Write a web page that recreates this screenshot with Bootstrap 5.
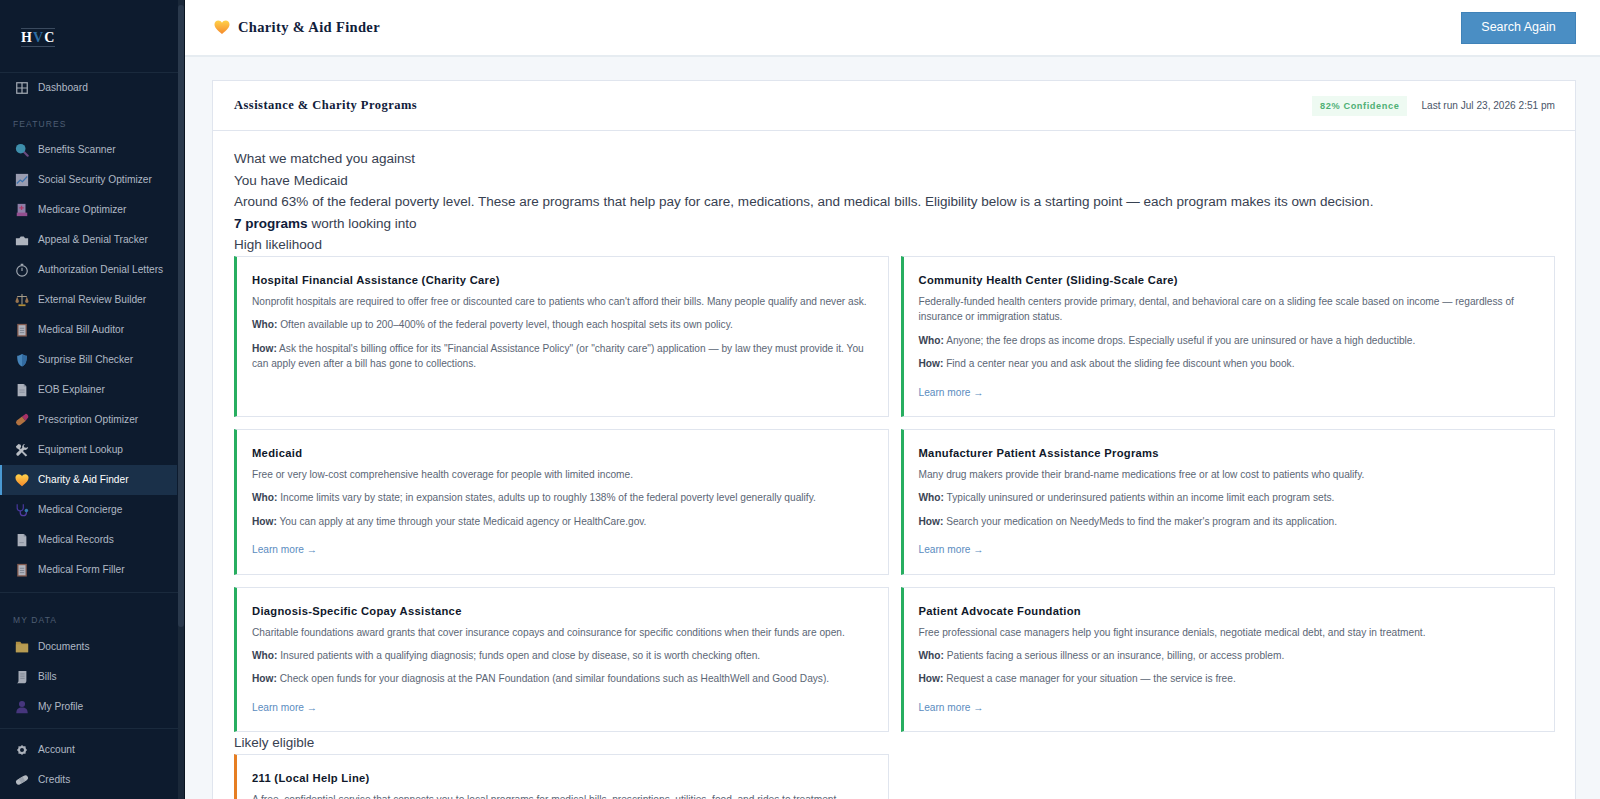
<!DOCTYPE html>
<html lang="en">
<head>
<meta charset="UTF-8">
<title>Charity &amp; Aid Finder</title>
<link href="https://cdn.jsdelivr.net/npm/bootstrap@5.3.0/dist/css/bootstrap.min.css" rel="stylesheet">
<style>
html, body { height: 100%; }
body { font-family: "Liberation Sans", Arial, sans-serif; background: #f4f7fa; overflow: hidden; color: #2d3748; }
.shell { height: 799px; }
/* sidebar */
.sidebar { width: 185px; flex: none; background: #0d1b2e; border-right: 1px solid #0a1420; height: 799px; overflow: hidden; }
.side-inner { width: 178px; flex: none; }
.side-track { width: 6px; flex: none; background: #1a2839; padding-top: 5px; }
.side-thumb { height: 622px; background: #2a394c; border-radius: 3px; }
.logo { height: 73px; border-bottom: 1px solid #1a2a3d; padding: 25px 0 0 21px; }
.logo span { display: inline-block; font-family: "Liberation Serif", serif; font-weight: 700; font-size: 14px; line-height: 17px; letter-spacing: 1.1px; color: #fff; border-top: 1px solid #3a4a5e; border-bottom: 1px solid #3a4a5e; }
.logo b { color: #2e6da4; }
.side-link { display: flex; align-items: center; height: 30px; padding-left: 13px; gap: 9px; color: #b0b9c5; font-size: 10.2px; text-decoration: none; border-left: 2px solid transparent; margin-right: 1px; }
.side-link svg { width: 14px; height: 14px; flex: none; opacity: .75; }
.side-link.active { background: #1a3049; color: #fff; border-left-color: #4a9ad4; }
.side-link.active svg { opacity: 1; }
.side-label { font-size: 8.5px; letter-spacing: 1.1px; color: #4d5e73; padding-left: 13px; line-height: 12px; }
.side-sep { border-top: 1px solid #1a2a3d; }
/* top bar */
.topbar { height: 57px; background: #fff; border-bottom: 2px solid #e6ecf1; padding: 0 24px 0 29px; flex: none; }
.page-title { font-family: "Liberation Serif", serif; font-weight: 700; font-size: 14.5px; letter-spacing: .35px; color: #10203a; margin: 0; }
.btn-search { background: #4a8ec4; border: 1px solid #3f82b8; color: #fff; font-size: 12.5px; width: 115px; height: 32px; padding: 0; border-radius: 0; }
.content { padding: 23px 24px 0 27px; }
/* panel */
.panel { border: 1px solid #e0e5ee; border-radius: 0; }
.panel .card-header { background: #fff; height: 50px; padding: 0 20px 0 21px; border-bottom: 1px solid #e0e5ee; border-radius: 0; }
.panel-title { font-family: "Liberation Serif", serif; font-weight: 700; font-size: 12.5px; letter-spacing: .47px; color: #10203a; margin: 0; }
.conf { background: #eefaf2; color: #4fb075; font-size: 9.2px; font-weight: 700; letter-spacing: .6px; padding: 0 8px; height: 20px; line-height: 20px; }
.last-run { font-size: 10.1px; color: #4a5568; }
.panel .card-body { padding: 17px 20px 0 21px; font-size: 13.52px; line-height: 21.6px; color: #374151; }
.panel .card-body strong { color: #10203a; }
.prog-row { --bs-gutter-x: 12px; --bs-gutter-y: 12px; }
.prog { border: 1px solid #e0e5ee; border-left: 3.5px solid #27ae60; border-radius: 0; padding: 15px 18px 16px 15px; font-size: 10.17px; line-height: 15.4px; color: #5b6675; height: 100%; }
.prog.likely { border-left-color: #e67e22; }
.prog h6 { font-size: 11.2px; font-weight: 700; line-height: 16px; color: #10182a; margin: 0 0 6px; letter-spacing: .3px; }
.prog p { margin: 0 0 8px; }
.prog p b { color: #3a4454; }
.prog a { display: block; margin-top: 13px; color: #5b8cc0; text-decoration: none; }
</style>
</head>
<body>
<div class="shell d-flex">

  <aside class="sidebar d-flex">
    <div class="side-inner">
      <div class="logo"><span>H<b>V</b>C</span></div>

      <nav class="nav flex-column">
        <a class="side-link" href="#">
          <svg viewBox="0 0 16 16"><rect x="2" y="2" width="12" height="12" fill="none" stroke="#d5dae0" stroke-width="1.4"/><path d="M8 2v12M2 8h12" stroke="#d5dae0" stroke-width="1.4"/></svg>Dashboard</a>
      </nav>

      <div class="side-label" style="margin-top:15px;margin-bottom:5px">FEATURES</div>

      <nav class="nav flex-column">
        <a class="side-link" href="#">
          <svg viewBox="0 0 16 16"><path d="M10 10l4.500 4.500" stroke="#8a5a9a" stroke-width="2.400" stroke-linecap="round"/><circle cx="6.500" cy="6.500" r="5.500" fill="#4fb6d6"/></svg>Benefits Scanner</a>
        <a class="side-link" href="#">
          <svg viewBox="0 0 16 16"><rect x="1" y="1" width="14" height="14" fill="#c8c8dc"/><path d="M2 12l4-4 2.500 2L14 4" fill="none" stroke="#4a8ed8" stroke-width="1.400"/></svg>Social Security Optimizer</a>
        <a class="side-link" href="#">
          <svg viewBox="0 0 16 16"><rect x="3" y="1" width="9" height="11" fill="#b8a0d0"/><rect x="2" y="11" width="12" height="4" fill="#c060b0"/><path d="M7.500 3v5M5 5.500h5" stroke="#e8447a" stroke-width="1.400"/></svg>Medicare Optimizer</a>
        <a class="side-link" href="#">
          <svg viewBox="0 0 16 16"><path d="M1 6h4l1.500-2H10l1.500 2H15v7a1 1 0 0 1-1 1H2a1 1 0 0 1-1-1z" fill="#e4e8ee"/></svg>Appeal &amp; Denial Tracker</a>
        <a class="side-link" href="#">
          <svg viewBox="0 0 16 16"><circle cx="8" cy="9" r="6" fill="none" stroke="#d5dae0" stroke-width="1.300"/><path d="M8 9V5.500M6.500 1.500h3" stroke="#d5dae0" stroke-width="1.300"/></svg>Authorization Denial Letters</a>
        <a class="side-link" href="#">
          <svg viewBox="0 0 16 16"><path d="M8 1v12M2.500 4h11" stroke="#d8c8a8" stroke-width="1.200"/><path d="M0.500 9.500L2.500 4l2 5.500a2 2 0 0 1-4 0zM11.500 9.500L13.500 4l2 5.500a2 2 0 0 1-4 0z" fill="#c8935a"/><rect x="4" y="13" width="8" height="2" fill="#e8b23a"/></svg>External Review Builder</a>
        <a class="side-link" href="#">
          <svg viewBox="0 0 16 16"><rect x="2.500" y="1" width="11" height="14.500" fill="#a8705a"/><rect x="4" y="2.500" width="8" height="11.500" fill="#e8e8ee"/><path d="M5.500 6h5M5.500 8.500h5M5.500 11h5" stroke="#9aa0aa"/></svg>Medical Bill Auditor</a>
        <a class="side-link" href="#">
          <svg viewBox="0 0 16 16"><path d="M8 1c2 1.500 4 2 5.500 2 0 6-1 10-5.500 12.500C3.500 13 2.500 9 2.500 3 4 3 6 2.500 8 1z" fill="#5aa8e8"/><path d="M8 1c2 1.500 4 2 5.500 2 0 6-1 10-5.500 12.500z" fill="#3f86c8"/></svg>Surprise Bill Checker</a>
        <a class="side-link" href="#">
          <svg viewBox="0 0 16 16"><path d="M3 1h7l3 3v11H3z" fill="#dfe2ea"/><path d="M10 1v3h3z" fill="#aab0bc"/><path d="M5 8h6M5 10.500h6" stroke="#aab0bc"/></svg>EOB Explainer</a>
        <a class="side-link" href="#">
          <svg viewBox="0 0 16 16"><path d="M8 4l4-3a3 3 0 0 1 3 4l-3 4z" fill="#d8387a"/><path d="M8 4L2 8.500a3.400 3.400 0 0 0 4.500 5L12 9z" fill="#e89048"/></svg>Prescription Optimizer</a>
        <a class="side-link" href="#">
          <svg viewBox="0 0 16 16"><path d="M5 5l9 9-1.800 1.500L3.500 6.500z" fill="#e8ecf0"/><path d="M1 4l3-3 2.500 1 .5 2.500L4.500 7 2 6z" fill="#f2f4f6"/><path d="M15 4.500a3.500 3.500 0 0 1-4.500 3.300L4.500 14a1.500 1.500 0 0 1-2.500-2.500l6.300-6A3.500 3.500 0 0 1 11.500 1L9.800 3.200l1 2 2.200.3z" fill="#f2f4f6"/></svg>Equipment Lookup</a>
        <a class="side-link active" href="#">
          <svg viewBox="0 0 16 16"><defs><linearGradient id="hg" x1="0" y1="0" x2="0" y2="1"><stop offset="0" stop-color="#ffd24a"/><stop offset="1" stop-color="#f58a2c"/></linearGradient></defs><path d="M8 15C3 11 .5 8.500 .5 5.300 .5 3 2.300 1.500 4.300 1.500 5.800 1.500 7.200 2.300 8 3.700 8.800 2.300 10.200 1.500 11.700 1.500c2 0 3.800 1.500 3.800 3.800C15.500 8.500 13 11 8 15z" fill="url(#hg)"/></svg>Charity &amp; Aid Finder</a>
        <a class="side-link" href="#">
          <svg viewBox="0 0 16 16"><path d="M2.500 1.500v4a3.500 3.500 0 0 0 7 0v-4" fill="none" stroke="#5a3fc0" stroke-width="1.400"/><path d="M6 9v2a3.500 3.500 0 0 0 7 0V9.500" fill="none" stroke="#6a48c8" stroke-width="1.400"/><circle cx="13" cy="8.500" r="2" fill="#3f9ad8"/></svg>Medical Concierge</a>
        <a class="side-link" href="#">
          <svg viewBox="0 0 16 16"><path d="M3 1h7l3 3v11H3z" fill="#dfe2ea"/><path d="M10 1v3h3z" fill="#aab0bc"/><path d="M5 11h5" stroke="#aab0bc"/></svg>Medical Records</a>
        <a class="side-link" href="#">
          <svg viewBox="0 0 16 16"><rect x="2.500" y="1" width="11" height="14.500" fill="#a8705a"/><rect x="4" y="2.500" width="8" height="11.500" fill="#e8e8ee"/><path d="M5.500 6h5M5.500 8.500h5M5.500 11h5" stroke="#9aa0aa"/></svg>Medical Form Filler</a>
      </nav>

      <div class="side-sep" style="margin-top:7px"></div>
      <div class="side-label" style="margin-top:21px;margin-bottom:6px">MY DATA</div>

      <nav class="nav flex-column">
        <a class="side-link" href="#">
          <svg viewBox="0 0 16 16"><path d="M1 2h5l1.500 2H15v10H1z" fill="#e8b84a"/><rect x="1" y="5" width="14" height="9" fill="#f0c860"/></svg>Documents</a>
        <a class="side-link" href="#">
          <svg viewBox="0 0 16 16"><path d="M4 1h9v11c0 1.500-.5 3-2 3H2c1 0 2-1 2-3z" fill="#d8dce4"/><path d="M6 4.500h5M6 7h5M6 9.500h5" stroke="#a0a6b2"/></svg>Bills</a>
        <a class="side-link" href="#">
          <svg viewBox="0 0 16 16"><circle cx="8" cy="4.500" r="3.500" fill="#5a3f98"/><path d="M1.500 15c0-5 2.500-6.500 6.500-6.500s6.500 1.500 6.500 6.500z" fill="#5a3f98"/></svg>My Profile</a>
      </nav>

      <div class="side-sep" style="margin-top:6px;margin-bottom:6px"></div>

      <nav class="nav flex-column">
        <a class="side-link" href="#">
          <svg viewBox="0 0 16 16"><circle cx="8" cy="8" r="3.500" fill="none" stroke="#e0e4ea" stroke-width="2.400"/><path d="M8 2.500v2M8 11.500v2M2.500 8h2M11.500 8h2M4.100 4.100l1.400 1.400M10.500 10.500l1.400 1.400M4.100 11.900l1.400-1.400M10.500 5.500l1.400-1.400" stroke="#e0e4ea" stroke-width="1.600"/></svg>Account</a>
        <a class="side-link" href="#">
          <svg viewBox="0 0 16 16"><rect x=".5" y="5" width="15" height="6" rx="3" fill="#eceff3" transform="rotate(-32 8 8)"/><rect x="5.500" y="5" width="5" height="6" fill="#c8ced6" transform="rotate(-32 8 8)"/></svg>Credits</a>
      </nav>
    </div>
    <div class="side-track"><div class="side-thumb"></div></div>
  </aside>

  <main class="flex-grow-1 d-flex flex-column" style="min-width:0">
    <header class="topbar d-flex align-items-center justify-content-between">
      <h1 class="page-title d-flex align-items-center gap-2">
        <svg width="16" height="16" viewBox="0 0 16 16"><defs><linearGradient id="hg2" x1="0" y1="0" x2="0" y2="1"><stop offset="0" stop-color="#ffd24a"/><stop offset="1" stop-color="#f58a2c"/></linearGradient></defs><path d="M8 15C3 11 .5 8.500 .5 5.300 .5 3 2.300 1.500 4.300 1.500 5.800 1.500 7.200 2.300 8 3.700 8.800 2.300 10.200 1.500 11.700 1.500c2 0 3.800 1.500 3.800 3.800C15.500 8.500 13 11 8 15z" fill="url(#hg2)"/></svg>
        Charity &amp; Aid Finder</h1>
      <button class="btn btn-search">Search Again</button>
    </header>

    <div class="content">
      <div class="card panel">
        <div class="card-header d-flex align-items-center justify-content-between">
          <h2 class="panel-title">Assistance &amp; Charity Programs</h2>
          <div class="d-flex align-items-center" style="gap:14px">
            <span class="conf">82% Confidence</span>
            <span class="last-run">Last run Jul 23, 2026 2:51 pm</span>
          </div>
        </div>
        <div class="card-body">
          <div>What we matched you against</div>
          <div>You have Medicaid</div>
          <div>Around 63% of the federal poverty level. These are programs that help pay for care, medications, and medical bills. Eligibility below is a starting point — each program makes its own decision.</div>
          <div><strong>7 programs</strong> worth looking into</div>
          <div>High likelihood</div>

          <div class="row prog-row">
            <div class="col-6">
              <div class="prog">
                <h6>Hospital Financial Assistance (Charity Care)</h6>
                <p>Nonprofit hospitals are required to offer free or discounted care to patients who can't afford their bills. Many people qualify and never ask.</p>
                <p><b>Who:</b> Often available up to 200–400% of the federal poverty level, though each hospital sets its own policy.</p>
                <p><b>How:</b> Ask the hospital's billing office for its "Financial Assistance Policy" (or "charity care") application — by law they must provide it. You can apply even after a bill has gone to collections.</p>
              </div>
            </div>
            <div class="col-6">
              <div class="prog">
                <h6>Community Health Center (Sliding-Scale Care)</h6>
                <p>Federally-funded health centers provide primary, dental, and behavioral care on a sliding fee scale based on income — regardless of insurance or immigration status.</p>
                <p><b>Who:</b> Anyone; the fee drops as income drops. Especially useful if you are uninsured or have a high deductible.</p>
                <p><b>How:</b> Find a center near you and ask about the sliding fee discount when you book.</p>
                <a href="#">Learn more →</a>
              </div>
            </div>
            <div class="col-6">
              <div class="prog">
                <h6>Medicaid</h6>
                <p>Free or very low-cost comprehensive health coverage for people with limited income.</p>
                <p><b>Who:</b> Income limits vary by state; in expansion states, adults up to roughly 138% of the federal poverty level generally qualify.</p>
                <p><b>How:</b> You can apply at any time through your state Medicaid agency or HealthCare.gov.</p>
                <a href="#">Learn more →</a>
              </div>
            </div>
            <div class="col-6">
              <div class="prog">
                <h6>Manufacturer Patient Assistance Programs</h6>
                <p>Many drug makers provide their brand-name medications free or at low cost to patients who qualify.</p>
                <p><b>Who:</b> Typically uninsured or underinsured patients within an income limit each program sets.</p>
                <p><b>How:</b> Search your medication on NeedyMeds to find the maker's program and its application.</p>
                <a href="#">Learn more →</a>
              </div>
            </div>
            <div class="col-6">
              <div class="prog">
                <h6>Diagnosis-Specific Copay Assistance</h6>
                <p>Charitable foundations award grants that cover insurance copays and coinsurance for specific conditions when their funds are open.</p>
                <p><b>Who:</b> Insured patients with a qualifying diagnosis; funds open and close by disease, so it is worth checking often.</p>
                <p><b>How:</b> Check open funds for your diagnosis at the PAN Foundation (and similar foundations such as HealthWell and Good Days).</p>
                <a href="#">Learn more →</a>
              </div>
            </div>
            <div class="col-6">
              <div class="prog">
                <h6>Patient Advocate Foundation</h6>
                <p>Free professional case managers help you fight insurance denials, negotiate medical debt, and stay in treatment.</p>
                <p><b>Who:</b> Patients facing a serious illness or an insurance, billing, or access problem.</p>
                <p><b>How:</b> Request a case manager for your situation — the service is free.</p>
                <a href="#">Learn more →</a>
              </div>
            </div>
          </div>

          <div>Likely eligible</div>
          <div class="row prog-row">
            <div class="col-6">
              <div class="prog likely">
                <h6>211 (Local Help Line)</h6>
                <p>A free, confidential service that connects you to local programs for medical bills, prescriptions, utilities, food, and rides to treatment.</p>
              </div>
            </div>
          </div>
        </div>
      </div>
    </div>
  </main>
</div>
<script src="https://cdn.jsdelivr.net/npm/bootstrap@5.3.0/dist/js/bootstrap.bundle.min.js"></script>
</body>
</html>
